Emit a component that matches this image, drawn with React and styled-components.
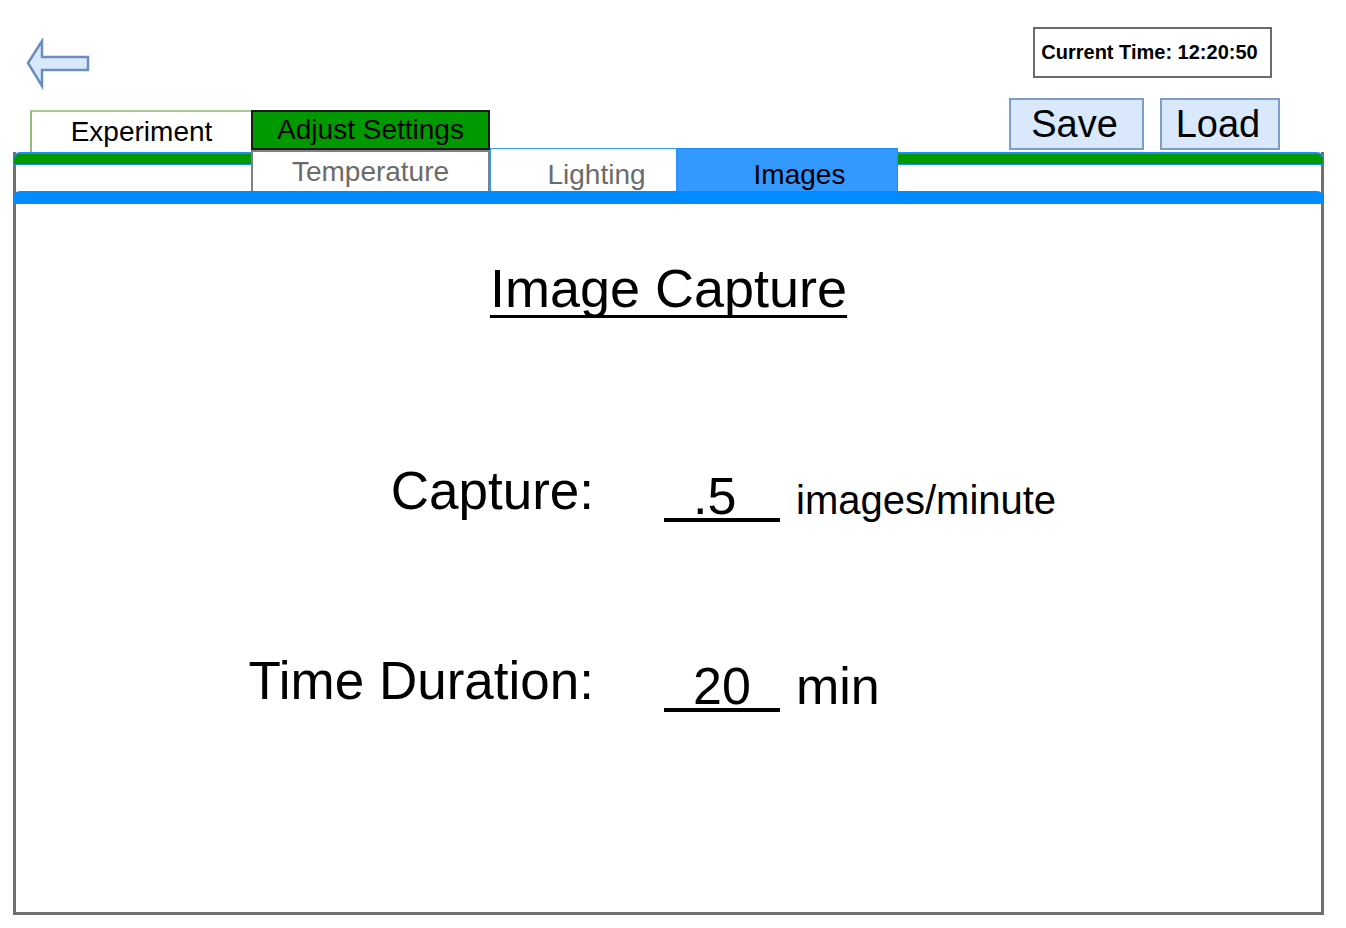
import React from "react";
import styled, { createGlobalStyle } from "styled-components";

const Global = createGlobalStyle`
  html, body { margin: 0; padding: 0; background: #ffffff; }
  body { font-family: "Liberation Sans", Arial, sans-serif; color: #000; }
  * { box-sizing: border-box; }
`;

const Page = styled.div`
  width: 1346px;
  height: 928px;
  overflow: hidden;
`;

const Header = styled.header`
  height: 152px;
  display: flex;
  justify-content: space-between;
  padding-right: 66px;
`;

const LeftCol = styled.div`
  display: flex;
  flex-direction: column;
  padding-top: 38px;
`;

const BackButton = styled.button`
  margin-left: 26px;
  width: 66px;
  height: 52px;
  padding: 0;
  border: none;
  background: none;
  cursor: pointer;
  display: block;
`;

const MainTabs = styled.div`
  margin-top: 20px;
  margin-left: 30px;
  display: flex;
  align-items: flex-start;
`;

const MainTab = styled.div`
  width: ${(p) => p.$w}px;
  height: ${(p) => (p.$active ? 40 : 42)}px;
  display: flex;
  align-items: center;
  justify-content: center;
  font-size: 28px;
  color: #000;
  background: ${(p) => (p.$active ? "#009900" : "#ffffff")};
  border: ${(p) => (p.$active ? "2px solid #1a1a1a" : "none")};
  ${(p) =>
    !p.$active &&
    `border-top: 2px solid #a3cc8e; border-left: 2px solid #8fbf77;`}
`;

const RightCol = styled.div`
  display: flex;
  flex-direction: column;
  align-items: flex-end;
  padding-top: 27px;
`;

const TimeBox = styled.div`
  width: 239px;
  height: 51px;
  margin-right: 8px;
  border: 2px solid #6a6a6a;
  display: flex;
  align-items: center;
  justify-content: center;
  font-weight: bold;
  font-size: 20px;
  padding-right: 6px;
`;

const ButtonRow = styled.div`
  margin-top: 20px;
  display: flex;
  gap: 16px;
`;

const FileButton = styled.button`
  width: ${(p) => p.$w}px;
  height: 52px;
  background: #dae8fc;
  border: 2px solid #7c9cc9;
  font-family: "Liberation Sans", Arial, sans-serif;
  font-size: 38px;
  color: #000;
  padding: 0 4px 0 0;
  line-height: 44px;
  cursor: pointer;
`;

const Panel = styled.section`
  margin-left: 13px;
  width: 1311px;
  height: 763px;
  border: 3px solid #707070;
  border-top: none;
  display: flex;
  flex-direction: column;
`;

const Bar = styled.div`
  margin: 0 -3px;
  height: 13px;
  flex: 0 0 13px;
  border-radius: 7px 7px 0 0;
  background: ${(p) => p.$color};
  border: ${(p) => (p.$outlined ? "1px solid #1f8bff" : "none")};
  ${(p) => p.$outlined && "border-top-width: 2px;"}
`;

const SubTabs = styled.nav`
  margin-top: -17px;
  height: 43px;
  padding-left: 235px;
  display: flex;
  align-items: flex-end;
  position: relative;
  z-index: 1;
`;

const SubTab = styled.div`
  width: ${(p) => p.$w}px;
  height: ${(p) => p.$h}px;
  display: flex;
  align-items: center;
  justify-content: center;
  font-size: 28px;
  padding-top: ${(p) => p.$pt || 0}px;
  padding-left: ${(p) => p.$pl || 0}px;
  color: ${(p) => (p.$active ? "#000" : "#6b6b6b")};
  background: ${(p) => (p.$active ? "#3399ff" : "#ffffff")};
  border: ${(p) => p.$border};
  border-bottom: none;
`;

const Content = styled.div`
  display: flex;
  flex-direction: column;
`;

const Title = styled.h1`
  margin: 53px 0 0;
  text-align: center;
  font-size: 54px;
  font-weight: normal;
  line-height: 62px;
  text-decoration: underline;
  text-decoration-thickness: 3px;
  text-underline-offset: 8px;
  text-decoration-skip-ink: none;
`;

const Row = styled.div`
  display: flex;
  align-items: flex-start;
  margin-top: ${(p) => p.$mt}px;
`;

const Label = styled.div`
  flex: 0 0 578px;
  text-align: right;
  font-size: 53px;
  line-height: 60px;
`;

const Field = styled.div`
  margin-left: 70px;
  width: 116px;
  padding-top: 13px;
  padding-left: 29px;
  font-size: 52px;
  line-height: 44px;
  border-bottom: 4px solid #000;
`;

const Unit = styled.div`
  margin-left: 16px;
  font-size: ${(p) => p.$size}px;
  line-height: ${(p) => Math.round(p.$size * 1.15)}px;
  padding-top: ${(p) => p.$pt}px;
`;

const BackArrow = () => (
  <svg width="66" height="52" viewBox="0 0 66 52">
    <polygon
      points="2,25 16,3 16,19 62,19 62,32 16,32 16,48"
      fill="#dae8fc"
      stroke="#6c8ebf"
      strokeWidth="2.5"
      strokeLinejoin="miter"
    />
  </svg>
);

export default function App() {
  return (
    <Page>
      <Global />
      <Header>
        <LeftCol>
          <BackButton aria-label="Back">
            <BackArrow />
          </BackButton>
          <MainTabs>
            <MainTab $w={221}>Experiment</MainTab>
            <MainTab $w={239} $active>
              Adjust Settings
            </MainTab>
          </MainTabs>
        </LeftCol>
        <RightCol>
          <TimeBox>Current Time: 12:20:50</TimeBox>
          <ButtonRow>
            <FileButton $w={135}>Save</FileButton>
            <FileButton $w={120}>Load</FileButton>
          </ButtonRow>
        </RightCol>
      </Header>
      <Panel>
        <Bar $color="#009900" $outlined />
        <SubTabs>
          <SubTab $w={239} $h={41} $border="2px solid #808080">
            Temperature
          </SubTab>
          <SubTab $w={187} $h={43} $pt={10} $pl={26} $border="1px solid #3399ff">
            Lighting
          </SubTab>
          <SubTab $w={221} $h={43} $pt={10} $pl={24} $active $border="1px solid #1f8cff">
            Images
          </SubTab>
        </SubTabs>
        <Bar $color="#008cff" />
        <Content>
          <Title>Image Capture</Title>
          <Row $mt={142}>
            <Label>Capture:</Label>
            <Field>.5</Field>
            <Unit $size={40} $pt={16}>
              images/minute
            </Unit>
          </Row>
          <Row $mt={128}>
            <Label>Time Duration:</Label>
            <Field>20</Field>
            <Unit $size={52} $pt={5}>
              min
            </Unit>
          </Row>
        </Content>
      </Panel>
    </Page>
  );
}
